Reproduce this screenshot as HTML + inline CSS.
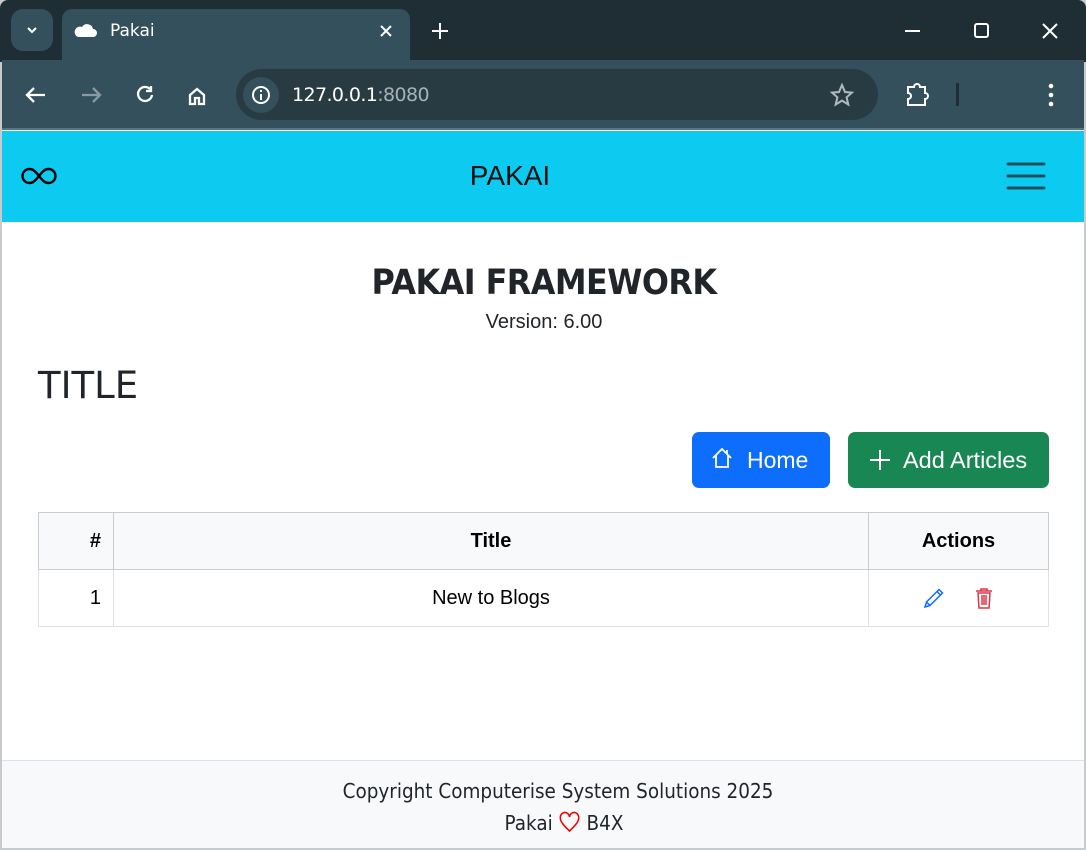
<!DOCTYPE html>
<html><head><meta charset="utf-8"><style>
*{margin:0;padding:0;box-sizing:border-box}
body{width:1086px;height:850px;overflow:hidden;background:#c8cbce;font-family:"Liberation Sans",sans-serif;position:relative}
.abs{position:absolute}
#tabbar{left:0;top:0;width:1086px;height:62px;background:#1f2e35;border-radius:8px 8px 0 0}
#toolbar{left:2px;top:60px;width:1082px;height:70px;background:#33505c}
#page{left:2px;top:130px;width:1082px;height:718px;background:#fff}
.w{color:#fff}
</style></head><body>
<div class="abs" id="tabbar"></div>
<div class="abs" style="left:11px;top:9px;width:42px;height:42px;background:#33505c;border-radius:12px"></div>
<svg class="abs" style="left:24px;top:22px" width="16" height="16"><path d="M4 6l4 4 4-4" stroke="#fff" stroke-width="2" fill="none"/></svg>
<div class="abs" style="left:62px;top:9px;width:348px;height:54px;background:#33505c;border-radius:10px 10px 0 0"></div>
<svg class="abs" style="left:73px;top:21px" width="26" height="18"><path d="M5 16h15a4 4 0 0 0 0-8 6 6 0 0 0-11-2 5 5 0 0 0-4 10z" fill="#fff"/></svg>
<div class="abs w" style="left:110px;top:21px;font-size:17px;font-family:'DejaVu Sans',sans-serif">Pakai</div>
<svg class="abs" style="left:377px;top:22px" width="18" height="18"><path d="M4 4l10 10M14 4L4 14" stroke="#fff" stroke-width="2"/></svg>
<svg class="abs" style="left:430px;top:21px" width="20" height="20"><path d="M10 2v16M2 10h16" stroke="#fff" stroke-width="2"/></svg>
<svg class="abs" style="left:900px;top:20px" width="170" height="24"><path d="M5 11h15" stroke="#fff" stroke-width="2"/><rect x="75" y="4" width="13" height="13" rx="2" stroke="#fff" stroke-width="2" fill="none"/><path d="M143 4l14 14M157 4l-14 14" stroke="#fff" stroke-width="2"/></svg>
<div class="abs" id="toolbar"></div>
<svg class="abs" style="left:20px;top:80px" width="200" height="30"><g stroke="#fff" stroke-width="2.3" fill="none"><path d="M25 15H7M14 8l-7 7 7 7"/><path d="M62 15h18M73 8l7 7-7 7" stroke="#8a9aa1"/><path d="M130 9a7 7 0 1 0 2 6M131 6v5h-5"/><path d="M170 24v-9l7-6 7 6v9h-5v-6h-4v6z"/></g></svg>
<div class="abs" style="left:236px;top:69px;width:642px;height:51px;background:#283b43;border-radius:26px"></div>
<div class="abs" style="left:243px;top:77px;width:36px;height:36px;background:#33505c;border-radius:18px"></div>
<svg class="abs" style="left:251px;top:85px" width="20" height="20"><circle cx="10" cy="10" r="8" stroke="#fff" stroke-width="2" fill="none"/><path d="M10 9v6M10 5v2" stroke="#fff" stroke-width="2"/></svg>
<div class="abs" style="left:292px;top:84px;font-size:19px;color:#fff;font-family:'DejaVu Sans',sans-serif;letter-spacing:-0.6px">127.0.0.1<span style="color:#a6b2b7">:8080</span></div>
<svg class="abs" style="left:830px;top:83px" width="24" height="24"><path d="M12 2l3 7 7 .6-5.4 4.7 1.7 7.2L12 17.6 5.7 21.5l1.7-7.2L2 9.6 9 9z" stroke="#b0b9bd" stroke-width="2" fill="none"/></svg>
<svg class="abs" style="left:905px;top:81px" width="30" height="28"><path d="M3 6h6a3 3 0 0 1 6 0h5v6a3 3 0 0 1 0 6v6H3v-6a3 3 0 0 0 0-6z" stroke="#fff" stroke-width="2" fill="none"/></svg>
<div class="abs" style="left:956px;top:83px;width:3px;height:23px;background:#1f2e35"></div>
<svg class="abs" style="left:1044px;top:82px" width="14" height="26"><circle cx="7" cy="4" r="2.3" fill="#fff"/><circle cx="7" cy="13" r="2.3" fill="#fff"/><circle cx="7" cy="22" r="2.3" fill="#fff"/></svg>
<div class="abs" style="left:2px;top:128px;width:1082px;height:2px;background:#5a7580"></div>
<div class="abs" id="page"></div>
<div class="abs" style="left:2px;top:131px;width:1082px;height:91px;background:#0dcaf0"></div>
<svg class="abs" style="left:19px;top:165px" width="40" height="22"><path d="M20 11c-4-5-6-7-9.5-7a7 7 0 0 0 0 14c3.5 0 5.5-2 9.5-7s6-7 9.5-7a7 7 0 0 1 0 14c-3.5 0-5.5-2-9.5-7z" stroke="#000" stroke-width="2.4" fill="none"/></svg>
<div class="abs" style="left:0;width:1020px;top:160px;text-align:center;font-size:28px;color:#111">PAKAI</div>
<svg class="abs" style="left:1006px;top:160px" width="40" height="32"><path d="M2 4h36M2 16h36M2 28h36" stroke="#1b4f5c" stroke-width="3" stroke-linecap="round"/></svg>
<div class="abs" style="left:0;width:1088px;top:263px;text-align:center;font-size:35px;font-family:'DejaVu Sans',sans-serif;font-weight:600;color:#212529;letter-spacing:-0.6px;transform:scaleX(0.91)">PAKAI FRAMEWORK</div>
<div class="abs" style="left:0;width:1088px;top:311px;text-align:center;font-size:20px;color:#212529">Version: 6.00</div>
<div class="abs" style="left:38px;top:364px;font-size:37px;color:#212529;font-family:'DejaVu Sans',sans-serif">TITLE</div>
<div class="abs" style="left:692px;top:432px;width:138px;height:56px;background:#0d6efd;border-radius:7px"></div>
<svg class="abs" style="left:710px;top:446px" width="26" height="26"><path d="M3 12L12 3l9 9M6 9v12h12V9M17 4v4" stroke="#fff" stroke-width="1.8" fill="none"/></svg>
<div class="abs w" style="left:747px;top:447px;font-size:23px">Home</div>
<div class="abs" style="left:848px;top:432px;width:201px;height:56px;background:#198754;border-radius:7px"></div>
<svg class="abs" style="left:869px;top:449px" width="22" height="22"><path d="M11 1v20M1 11h20" stroke="#fff" stroke-width="2"/></svg>
<div class="abs w" style="left:903px;top:447px;font-size:23.5px">Add Articles</div>
<table class="abs" style="left:38px;top:512px;width:1011px;border-collapse:collapse;font-size:20px;color:#000">
<tr style="background:#f8f9fa;height:57px"><th style="width:75px;border:1px solid #ccc;text-align:right;padding-right:12px">#</th><th style="border:1px solid #ccc">Title</th><th style="width:180px;border:1px solid #ccc">Actions</th></tr>
<tr style="height:57px"><td style="border:1px solid #dee2e6;text-align:right;padding-right:12px">1</td><td style="border:1px solid #dee2e6;text-align:center">New to Blogs</td><td style="border:1px solid #dee2e6;text-align:center"><svg width="24" height="24" style="vertical-align:middle;margin-right:26px"><path d="M3 21l1.5-5L17 3.5l3.5 3.5L8 19.5zM15 5.5l3.5 3.5M4.5 16l3.5 3.5" stroke="#0d6efd" stroke-width="1.5" fill="none"/></svg><svg width="24" height="24" style="vertical-align:middle"><path d="M4 5h16M9 5V3h6v2M6 7l1 15h10l1-15zM10 9v10M12 9v10M14 9v10" stroke="#dc3545" stroke-width="1.5" fill="none"/></svg></td></tr>
</table>
<div class="abs" style="left:2px;top:760px;width:1082px;height:88px;background:#f8f9fa;border-top:1px solid #dee2e6"></div>
<div class="abs" style="left:15px;width:1086px;top:779px;text-align:center;font-size:20px;color:#212529;font-family:'DejaVu Sans',sans-serif;transform:scaleX(0.92)">Copyright Computerise System Solutions 2025</div>
<div class="abs" style="left:21px;width:1086px;top:811px;text-align:center;font-size:20px;color:#212529;font-family:'DejaVu Sans',sans-serif;transform:scaleX(0.92)">Pakai <svg width="24" height="22" style="vertical-align:-3px"><path d="M12 20C4 13 2 10 2 7a5 5 0 0 1 10-1 5 5 0 0 1 10 1c0 3-2 6-10 13z" stroke="#e00" stroke-width="1.6" fill="none"/></svg> B4X</div>
</body></html>
